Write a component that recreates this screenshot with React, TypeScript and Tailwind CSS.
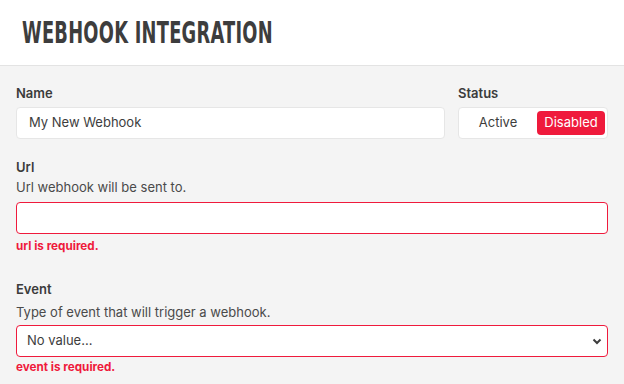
import React from "react";

export default function App() {
  return (
    <div
      className="w-[624px] h-[384px] overflow-hidden bg-[#f4f4f4] text-[#3d3d3d]"
      style={{ fontFamily: "Inter, 'Noto Sans', sans-serif" }}
    >
      <div className="h-[66px] bg-white border-b border-[#e3e3e3] flex items-center pl-[22px]">
        <h1
          className="inline-block origin-left scale-x-[0.66] text-[30px] font-bold leading-none tracking-[0.4px] text-[#3d3d3d] uppercase whitespace-nowrap"
          style={{ fontFamily: "'Liberation Sans Narrow', 'DejaVu Sans Condensed', sans-serif" }}
        >
          Webhook Integration
        </h1>
      </div>

      <div className="px-4 pt-[19px]">
        <div className="flex gap-[13px]">
          <div className="flex-1">
            <div className="text-[13px] font-semibold leading-4 text-[#3b3b3b]">Name</div>
            <div className="mt-[6px] h-8 bg-white border border-[#e6e6e6] rounded-[4px] flex items-center px-3 text-[13px] text-[#3d3d3d]">
              My New Webhook
            </div>
          </div>
          <div className="w-[150px]">
            <div className="text-[13px] font-semibold leading-4 text-[#3b3b3b]">Status</div>
            <div className="mt-[6px] h-8 bg-white border border-[#e6e6e6] rounded-[4px] flex items-center pr-[2px]">
              <div className="flex-1 text-center text-[13px] text-[#3d3d3d]">Active</div>
              <div className="w-[68px] h-6 rounded-[4px] bg-[#ef1a3c] text-white text-[13px] flex items-center justify-center">
                Disabled
              </div>
            </div>
          </div>
        </div>

        <div className="mt-[20px]">
          <div className="text-[13px] font-semibold leading-4 text-[#3b3b3b]">Url</div>
          <div className="mt-[4px] text-[13px] leading-4 text-[#4a4a4a]">Url webhook will be sent to.</div>
          <div className="mt-[7px] h-[32px] bg-white border border-[#ef1a3c] rounded-[4px]"></div>
          <div className="mt-[4px] text-[11.7px] font-bold leading-4 text-[#ef1a3c]">url is required.</div>
        </div>

        <div className="mt-[27px]">
          <div className="text-[13px] font-semibold leading-4 text-[#3b3b3b]">Event</div>
          <div className="mt-[7px] text-[13px] leading-4 text-[#4a4a4a]">Type of event that will trigger a webhook.</div>
          <div className="mt-[5px] h-[32px] bg-white border border-[#ef1a3c] rounded-[4px] flex items-center justify-between pl-[10px] pr-[4px]">
            <span className="text-[13px] text-[#3d3d3d]">No value...</span>
            <svg width="12" height="12" viewBox="0 0 12 12">
              <path d="M2.5 4.5 L6 8 L9.5 4.5" fill="none" stroke="#3d3d3d" strokeWidth="2" />
            </svg>
          </div>
          <div className="mt-[2px] text-[11.7px] font-bold leading-4 text-[#ef1a3c]">event is required.</div>
        </div>
      </div>
    </div>
  );
}
